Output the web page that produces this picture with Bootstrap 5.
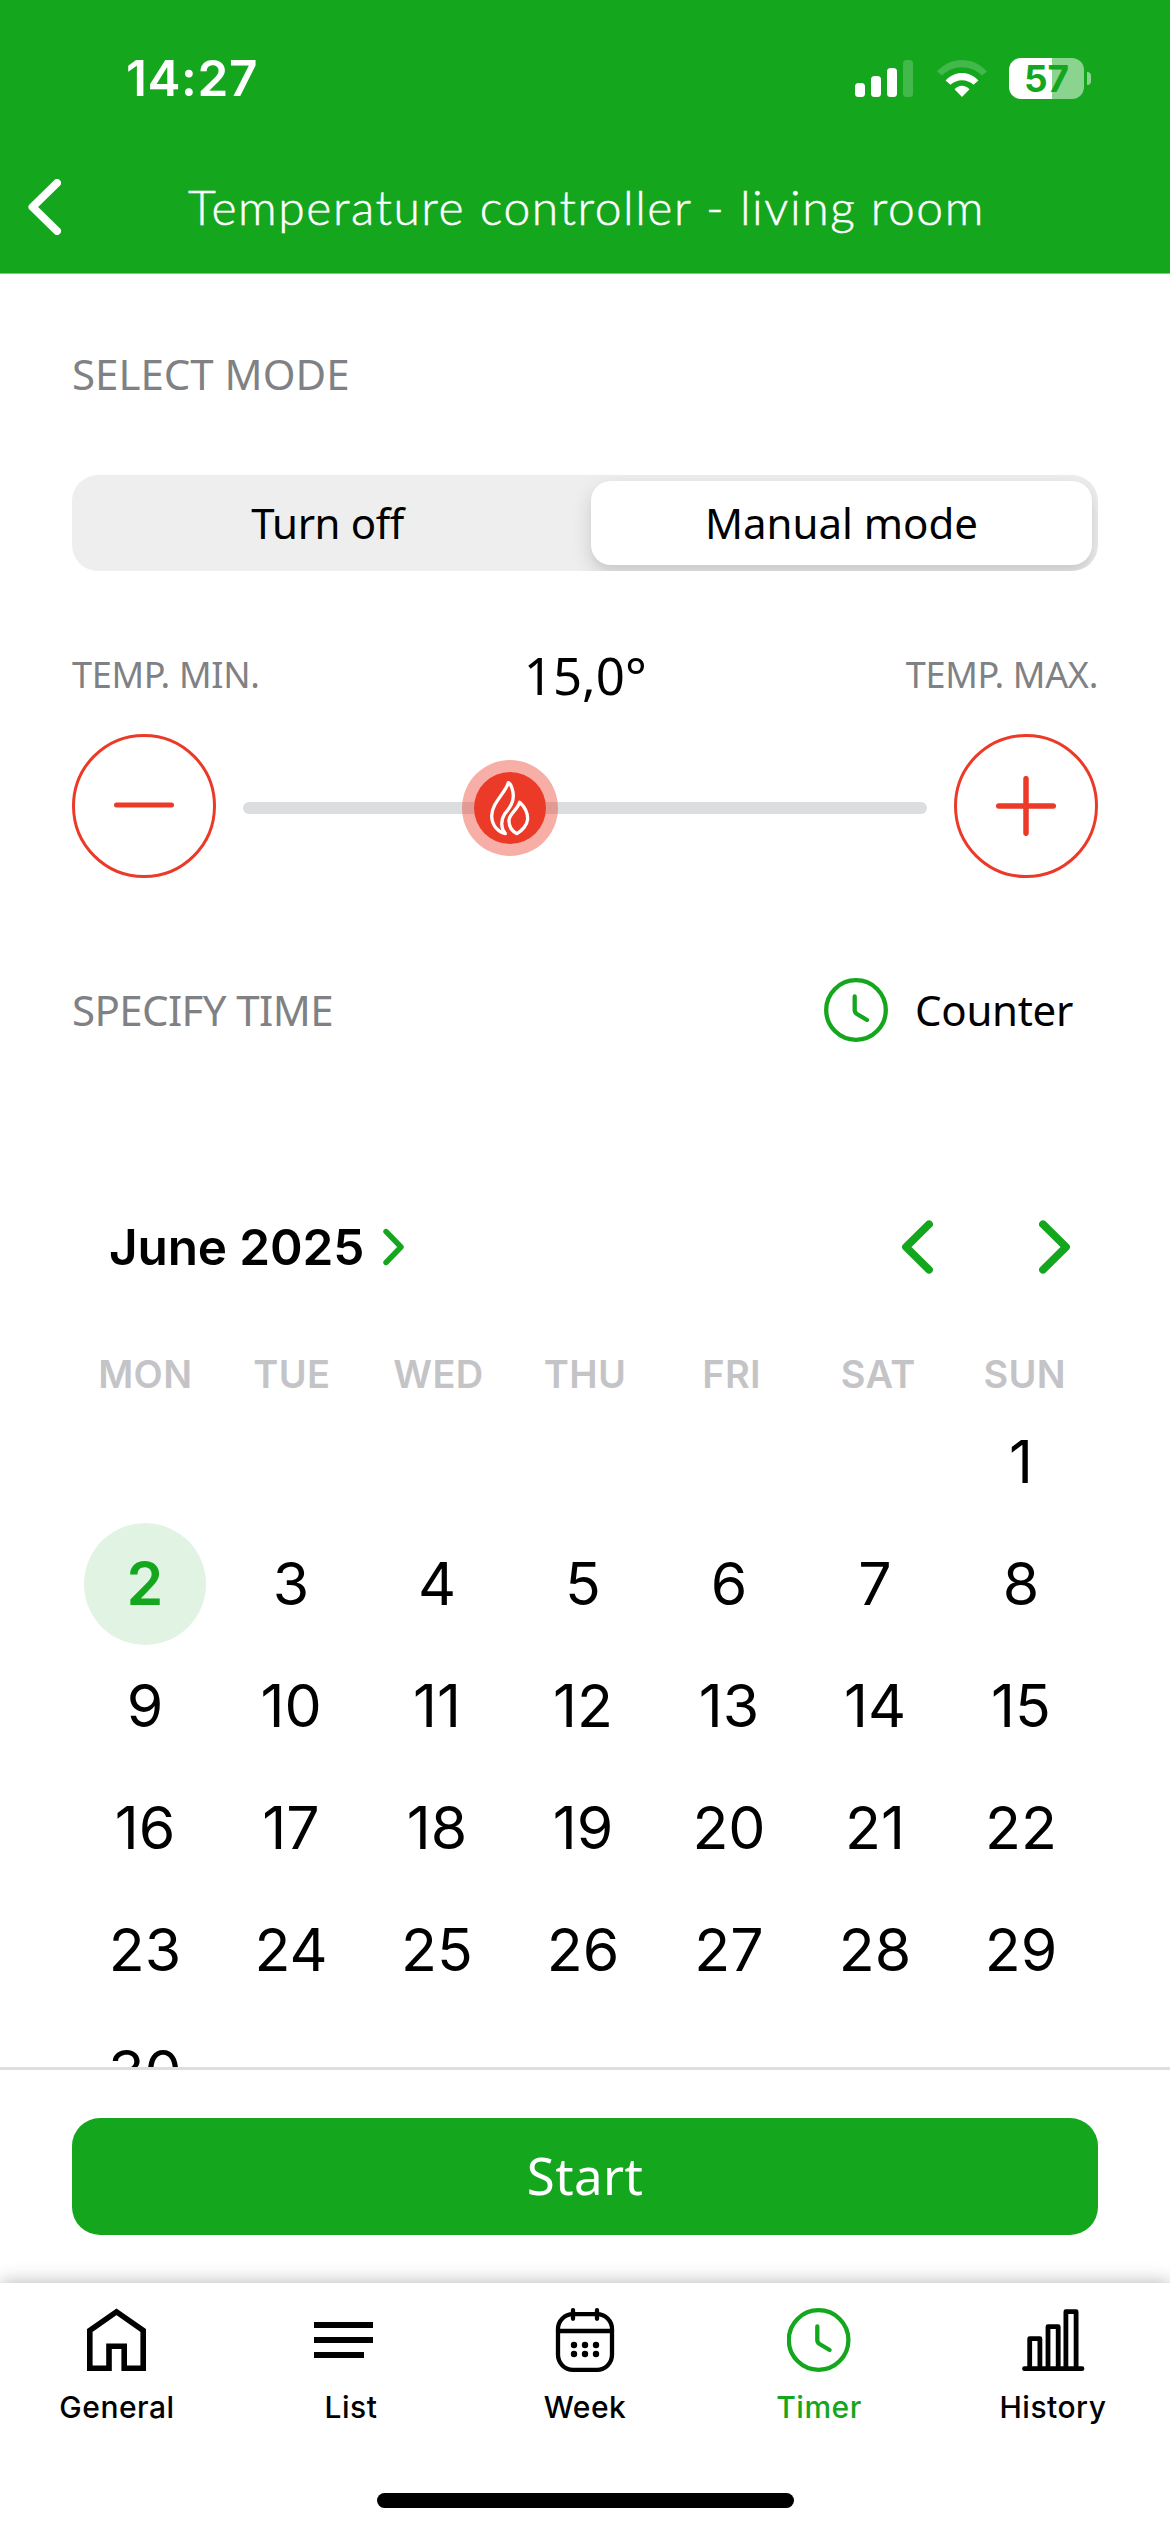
<!DOCTYPE html>
<html lang="en">
<head>
<meta charset="utf-8">
<meta name="viewport" content="width=device-width, initial-scale=1">
<title>Temperature controller - living room</title>
<link href="https://cdn.jsdelivr.net/npm/bootstrap@5.3.0/dist/css/bootstrap.min.css" rel="stylesheet">
<style>
  :root { --brand: #14a71e; --heat: #ec3a28; --muted: #808184; }
  body { background: #fff; color: #000; font-family: "Noto Sans", "Open Sans", sans-serif; font-size: 42px; }
  svg { display: block; flex: none; }
  .screen { width: 1170px; height: 2532px; }
  .ui-font { font-family: Inter, sans-serif; }

  .app-header { background: var(--brand); height: 274px; border-bottom: 1px solid #8fbf92; }
  .status-row { height: 156px; padding: 0 79px 0 126px; }
  .clock { font-size: 49.5px; font-weight: 600; letter-spacing: .6px; line-height: 60px; }
  .battery { width: 75px; height: 41px; border-radius: 12px; margin-left: 22px;
    background: linear-gradient(90deg, #fff 43px, #8ad48f 43px); color: var(--brand);
    font-size: 37px; font-weight: 700; line-height: 41px; }
  .battery-nub { width: 4px; height: 13px; margin-left: 3px; background: #8ad48f; border-radius: 0 4px 4px 0; }
  .title-row { height: 102px; padding: 0 27px 0 28px; }
  .title-row svg { width: 33px; }
  .page-title { font: 300 48px/60px Lato, sans-serif; letter-spacing: 1.56px; margin: 0; padding-left: 2px; -webkit-text-stroke: .5px #fff; white-space: nowrap; }

  .content { padding: 70px 72px 0; }
  .section-label { color: var(--muted); line-height: 60px; }
  .section-label-tight { letter-spacing: -.6px; }
  .mode-switch { height: 96px; margin-top: 71px; border-radius: 26px; background: #eee; padding: 6px; }
  .mode-switch .btn { font-size: 42px; line-height: 60px; border: 0; color: #000; border-radius: 20px; padding: 0; }
  .mode-switch .idle-mode { padding-right: 14px; letter-spacing: -.4px; }
  .mode-switch .active-mode { background: #fff; box-shadow: 0 8px 20px rgba(0,0,0,.14), 0 6px 5px rgba(0,0,0,.03); flex: 0 0 501px; }
  .temp-labels { height: 70px; margin-top: 69px; line-height: 70px; font-size: 36px; color: var(--muted); letter-spacing: -.3px; }
  .temp-value { font-size: 51px; color: #000; letter-spacing: 0; padding-left: 5px; }
  .slider-row { margin-top: 24px; }
  .step-btn { width: 144px; height: 144px; border: 3px solid var(--heat); }
  .track { height: 12px; margin: 4px 27px 0; background: #dcdddf; }
  .knob { top: 50%; transform: translate(-50%, -50%); width: 96px; height: 96px; background: rgba(236,58,41,.41); }
  .time-row { margin-top: 100px; padding-right: 25px; }
  .counter-label { gap: 27px; line-height: 60px; letter-spacing: -.3px; }

  .cal-head { margin-top: 175px; height: 60px; padding: 0 28px 0 37px; }
  .cal-month { font-size: 49.5px; font-weight: 600; line-height: 60px; letter-spacing: -.15px; }
  .cal-month + svg { margin-left: 19px; }
  .cal-arrows { gap: 106px; }
  .weekdays { margin-top: 72px; line-height: 50px; font-size: 38px; font-weight: 600; color: #c4c4c7; letter-spacing: .4px; }
  .days { margin-top: 2px; padding-right: 4px; display: grid; grid-template-columns: repeat(7, 1fr); grid-auto-rows: 122px; justify-items: center; font-size: 59px; line-height: 122px; }
  .days .today { width: 122px; border-radius: 50%; background: #e1f4e4; color: var(--brand); font-weight: 600; text-align: center; }
  .first-day { grid-column: 7; }

  .action-bar { border-top: 3px solid #dedede; padding: 48px 72px; }
  .action-bar .btn { height: 117px; border-radius: 28px; background: var(--brand); color: #fff; font-size: 51px; line-height: 112px; padding: 0 0 3px; border: 0; letter-spacing: .4px; }
  .tab-bar { height: 249px; padding-top: 25px; box-shadow: 0 0 18px rgba(0,0,0,.3); background: #fff; z-index: 1; }
  .tab-item { width: 234px; color: #000; font-size: 30px; font-weight: 500; letter-spacing: .5px; line-height: 40px; gap: 15px; }
  .tab-item.current { color: var(--brand); }
  .home-bar { width: 417px; height: 15px; margin: 66px auto 0; }
</style>
<script src="https://cdn.jsdelivr.net/npm/bootstrap@5.3.0/dist/js/bootstrap.bundle.min.js"></script>
</head>
<body>
<div class="screen d-flex flex-column overflow-hidden">

  <header class="app-header flex-shrink-0 text-white">
    <div class="status-row ui-font d-flex align-items-center justify-content-between">
      <span class="clock">14:27</span>
      <div class="d-flex align-items-center">
        <svg width="58" height="37" viewBox="0 0 58 37" fill="#fff"><rect y="23" width="10" height="14" rx="3.5"/><rect x="16" y="16" width="10" height="21" rx="3.5"/><rect x="32" y="8" width="10" height="29" rx="3.5"/><rect x="48" width="10" height="37" rx="3.5" opacity=".2"/></svg>
        <svg class="ms-4" width="50" height="37" viewBox="0 0 50 37" fill="#fff"><path opacity=".2" d="M0 11.5C14-3.8 36-3.8 50 11.5L45 15.5C34 4.5 16 4.5 5 15.5Z"/><path d="M8.6 20.5C17.5 10.5 32.5 10.5 41.4 20.5L36.5 24.8C30 18.8 20 18.8 13.5 24.8Z"/><path d="M17.5 29.3C21.5 24.5 28.5 24.5 32.5 29.3L25 37Z"/></svg>
        <div class="battery text-center">57</div>
        <div class="battery-nub"></div>
      </div>
    </div>
    <div class="title-row d-flex align-items-center justify-content-between">
      <svg height="56" viewBox="0 0 33 56" fill="none" stroke="#fff" stroke-width="8" stroke-linecap="round" stroke-linejoin="round"><path d="M29 4L4.5 28L29 52"/></svg>
      <h1 class="page-title">Temperature controller - living room</h1>
      <svg height="56" viewBox="0 0 33 56"></svg>
    </div>
  </header>

  <main class="content flex-grow-1 overflow-hidden">
    <div class="section-label">SELECT MODE</div>
    <div class="mode-switch d-flex overflow-hidden">
      <button class="btn idle-mode flex-fill">Turn off</button>
      <button class="btn active-mode">Manual mode</button>
    </div>

    <div class="temp-labels d-flex justify-content-between">
      <span>TEMP. MIN.</span><span class="temp-value">15,0°</span><span>TEMP. MAX.</span>
    </div>
    <div class="slider-row d-flex align-items-center">
      <div class="step-btn rounded-circle d-flex align-items-center justify-content-center">
        <svg width="60" height="60" viewBox="0 0 60 60" stroke="#ec3a28" stroke-width="5" stroke-linecap="round"><path d="M2.5 29H57.5"/></svg>
      </div>
      <div class="track flex-fill rounded-pill position-relative">
        <div class="knob rounded-circle position-absolute d-flex align-items-center justify-content-center" style="left:39.04%">
          <svg width="72" height="72" viewBox="72 66 216 216"><circle cx="180" cy="174" r="108" fill="#ec3a28"/><g fill="none" stroke="#fff" stroke-width="10" stroke-linejoin="round"><path d="M175 98C165 130 125 160 125 198C126 228 145 246 166 251C152 234 152 210 164 192C178 174 190 160 190 138C190 122 183 101 175 98Z"/><path d="M209 157C219 166 233 183 233 207C232 225 215 243 200 251C186 243 176 228 177 210C178 192 201 180 209 157Z"/></g></svg>
        </div>
      </div>
      <div class="step-btn rounded-circle d-flex align-items-center justify-content-center">
        <svg width="60" height="60" viewBox="0 0 60 60" stroke="#ec3a28" stroke-width="5.5" stroke-linecap="round"><path d="M2.7 30H57.3M30 2.7V57.3"/></svg>
      </div>
    </div>

    <div class="time-row d-flex align-items-center justify-content-between">
      <div class="section-label section-label-tight">SPECIFY TIME</div>
      <div class="counter-label d-flex align-items-center">
        <svg width="64" height="64" viewBox="0 0 64 64" fill="none" stroke="#14a71e" stroke-width="4.3" stroke-linecap="round"><circle cx="32" cy="32" r="29.8"/><path d="M30.7 18.5V32Q30.7 34.5 33 36L43 42"/></svg>
        <span>Counter</span>
      </div>
    </div>

    <div class="cal-head ui-font d-flex align-items-center justify-content-between">
      <div class="d-flex align-items-center">
        <span class="cal-month">June 2025</span>
        <svg width="21" height="40" viewBox="0 0 21 40" fill="none" stroke="#14a71e" stroke-width="5.4" stroke-linecap="round" stroke-linejoin="round"><path d="M3 4.5L18 20L3 35.5"/></svg>
      </div>
      <div class="cal-arrows d-flex">
        <svg width="31" height="54" viewBox="0 0 31 54" fill="none" stroke="#14a71e" stroke-width="7.8" stroke-linecap="round" stroke-linejoin="round"><path d="M27 4.3L4 27L27 49.7"/></svg>
        <svg width="31" height="54" viewBox="0 0 31 54" fill="none" stroke="#14a71e" stroke-width="7.8" stroke-linecap="round" stroke-linejoin="round"><path d="M4 4.3L27 27L4 49.7"/></svg>
      </div>
    </div>
    <div class="weekdays ui-font row g-0 text-center">
      <div class="col">MON</div><div class="col">TUE</div><div class="col">WED</div><div class="col">THU</div><div class="col">FRI</div><div class="col">SAT</div><div class="col">SUN</div>
    </div>
    <div class="days ui-font">
      <div class="first-day">1</div>
      <div class="today">2</div><div>3</div><div>4</div><div>5</div><div>6</div><div>7</div><div>8</div>
      <div>9</div><div>10</div><div>11</div><div>12</div><div>13</div><div>14</div><div>15</div>
      <div>16</div><div>17</div><div>18</div><div>19</div><div>20</div><div>21</div><div>22</div>
      <div>23</div><div>24</div><div>25</div><div>26</div><div>27</div><div>28</div><div>29</div>
      <div>30</div>
    </div>
  </main>

  <div class="action-bar flex-shrink-0">
    <button class="btn w-100">Start</button>
  </div>

  <nav class="tab-bar ui-font flex-shrink-0 position-relative">
    <div class="d-flex">
      <a class="tab-item d-flex flex-column align-items-center text-decoration-none">
        <svg width="64" height="64" viewBox="0 0 64 64" fill="none" stroke="currentColor" stroke-width="5.6"><path d="M4.8 60.2V22.5L31.5 3.8L58.2 22.5V60.2H39.2V38.3H24V60.2Z"/></svg>
        <span>General</span>
      </a>
      <a class="tab-item d-flex flex-column align-items-center text-decoration-none">
        <svg width="74" height="64" viewBox="0 0 74 64" fill="currentColor"><path d="M0 14H59V20H0zM0 29H59V35H0zM0 44H50V50H0z"/></svg>
        <span>List</span>
      </a>
      <a class="tab-item d-flex flex-column align-items-center text-decoration-none">
        <svg width="64" height="64" viewBox="0 0 64 64" fill="none" stroke="currentColor" stroke-width="4.3" stroke-linecap="round"><rect x="5" y="6.2" width="54" height="55.6" rx="15"/><path d="M5 23H59M20 2.2V10.8M44 2.2V10.8"/><g fill="currentColor" stroke="none"><circle cx="21" cy="37" r="3.2"/><circle cx="32" cy="37" r="3.2"/><circle cx="43" cy="37" r="3.2"/><circle cx="21" cy="46" r="3.2"/><circle cx="32" cy="46" r="3.2"/><circle cx="43" cy="46" r="3.2"/></g></svg>
        <span>Week</span>
      </a>
      <a class="tab-item current d-flex flex-column align-items-center text-decoration-none">
        <svg width="64" height="64" viewBox="0 0 64 64" fill="none" stroke="currentColor" stroke-width="4.3" stroke-linecap="round"><circle cx="31.6" cy="32" r="29.8"/><path d="M30.3 18.5V32Q30.3 34.5 32.6 36L42.6 42"/></svg>
        <span>Timer</span>
      </a>
      <a class="tab-item d-flex flex-column align-items-center text-decoration-none">
        <svg width="64" height="64" viewBox="0 0 64 64" fill="none" stroke="currentColor" stroke-width="4.8" stroke-linecap="round" stroke-linejoin="round"><path d="M3.5 60.7H61M8.7 60V30.7H18.9V60M27 60V18.7H37.2V60M44.9 60V3.7H55.1V60"/></svg>
        <span>History</span>
      </a>
    </div>
    <div class="home-bar bg-black rounded-pill"></div>
  </nav>
</div>
</body>
</html>
